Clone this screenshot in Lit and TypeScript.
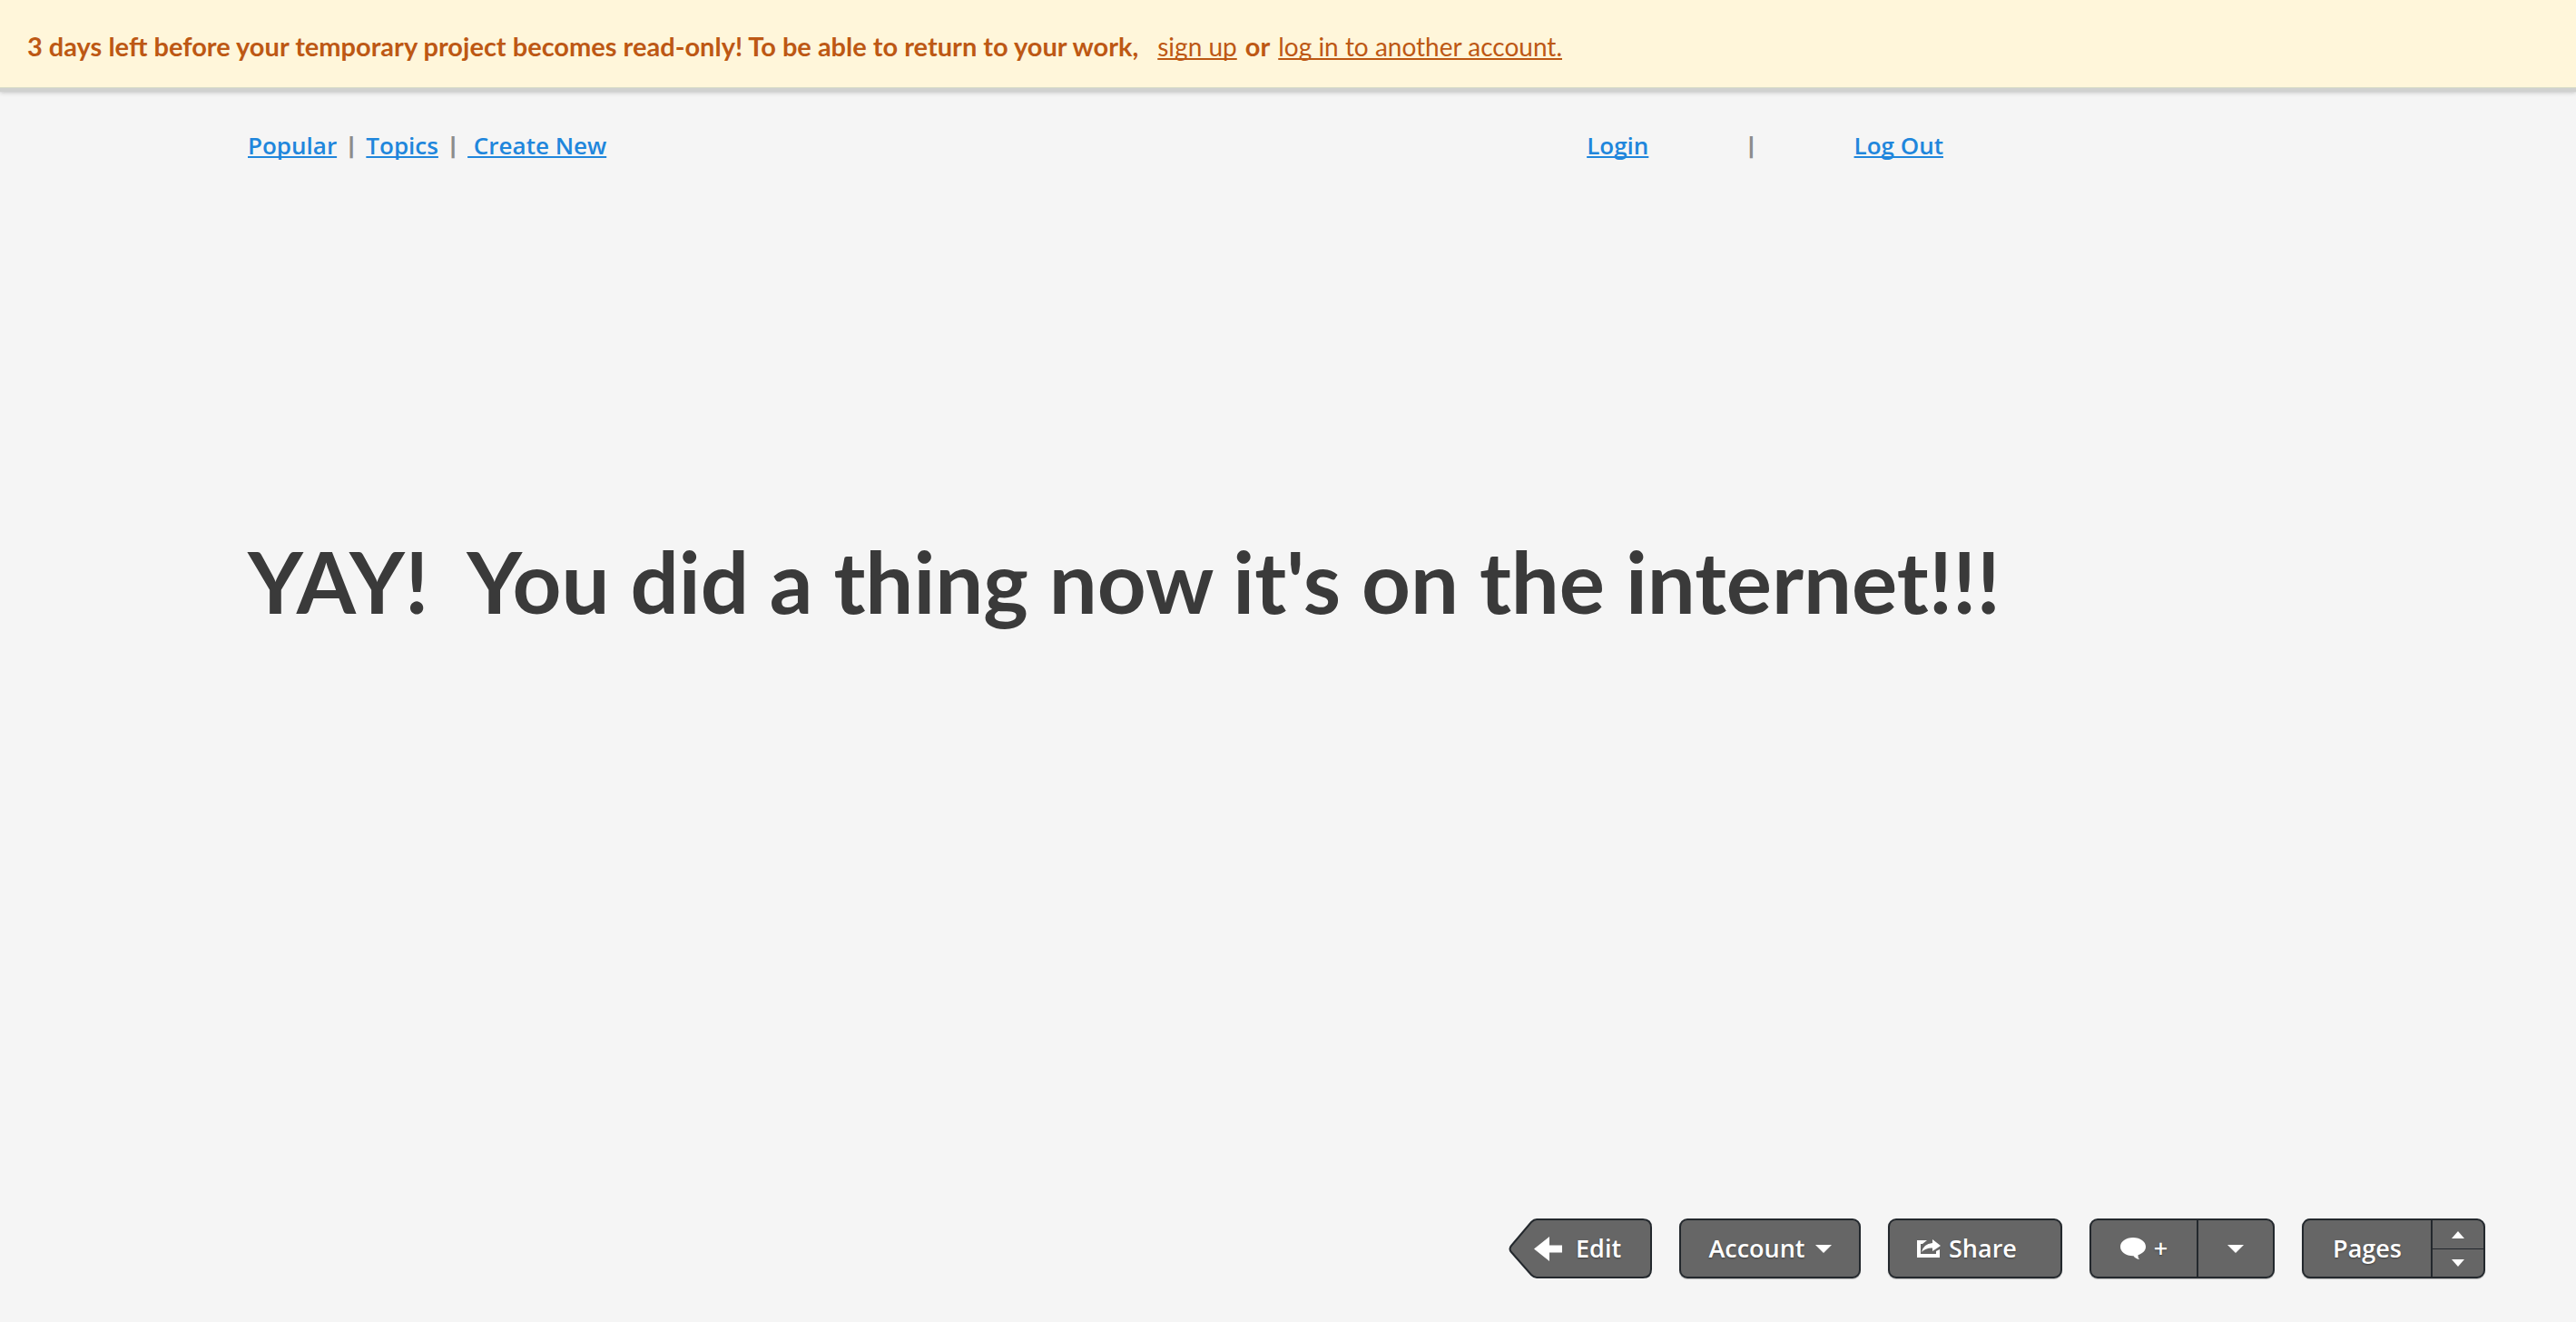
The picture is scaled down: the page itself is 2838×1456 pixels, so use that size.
import { LitElement, html, css, svg } from "lit";
import { customElement } from "lit/decorators.js";

const caretDown = html`<svg class="caret" width="18" height="9" viewBox="0 0 18 9" aria-hidden="true">${svg`<path d="M0 0H18L9 9Z" fill="#fff" />`}</svg>`;

@customElement("temp-banner")
export class TempBanner extends LitElement {
  static styles = css`
    :host {
      display: block;
      position: relative;
      background: #fff6da;
      border-bottom: 1px solid #d9dcc8;
      box-shadow: 0 4px 1px #d0d1cf, 0 5px 5px rgba(0, 0, 0, 0.2);
      color: #bd5814;
    }
    .message {
      display: flex;
      flex-wrap: wrap;
      align-items: baseline;
      column-gap: 9px;
      margin: 0;
      padding: 33px 30px 27px;
      font-size: 28px;
      line-height: 36px;
    }
    .strong {
      font-size: 29px;
      font-weight: 700;
    }
    .lead {
      margin-right: 12px;
    }
    a {
      color: inherit;
      text-decoration-thickness: 2px;
      text-underline-offset: 2px;
      text-decoration-skip-ink: none;
    }
  `;

  render() {
    return html`<p class="message">
      <span class="strong lead">3 days left before your temporary project becomes read-only! To be able to return to your work,</span>
      <a href="#signup">sign up</a>
      <span class="strong">or</span>
      <a href="#login">log in to another account.</a>
    </p>`;
  }
}

@customElement("page-nav")
export class PageNav extends LitElement {
  static styles = css`
    :host {
      display: block;
    }
    nav {
      display: flex;
      justify-content: space-between;
      flex-wrap: wrap;
      max-width: 1868px;
      font-family: "Open Sans", "Noto Sans", sans-serif;
      font-size: 26px;
      line-height: 36px;
      font-weight: 600;
    }
    .group {
      display: flex;
      align-items: center;
      gap: 10px;
    }
    .account {
      gap: 107px;
    }
    .bar {
      color: #8c8c8c;
      font-size: 24px;
      font-weight: 800;
    }
    a {
      color: #2086dc;
      white-space: pre;
      text-decoration-thickness: 2px;
      text-underline-offset: 2px;
      text-decoration-skip-ink: none;
    }
  `;

  render() {
    return html`<nav aria-label="Main">
      <div class="group">
        <a href="#popular">Popular</a>
        <span class="bar">|</span>
        <a href="#topics">Topics</a>
        <span class="bar">|</span>
        <a href="#create"> Create New</a>
      </div>
      <div class="group account">
        <a href="#login">Login</a>
        <span class="bar">|</span>
        <a href="#logout">Log Out</a>
      </div>
    </nav>`;
  }
}

@customElement("preview-toolbar")
export class PreviewToolbar extends LitElement {
  static styles = css`
    :host {
      display: block;
    }
    .bar {
      display: flex;
      flex-wrap: wrap;
      justify-content: flex-end;
      gap: 30px;
      font-family: "Open Sans", "Noto Sans", sans-serif;
    }
    button {
      display: flex;
      align-items: center;
      justify-content: center;
      margin: 0;
      border: 0;
      padding: 0;
      background: none;
      color: #fff;
      font: inherit;
      font-size: 27px;
      font-weight: 600;
      line-height: 36px;
      text-shadow: 0 1px 2px rgba(0, 0, 0, 0.4);
      cursor: pointer;
    }
    .box {
      box-sizing: border-box;
      height: 66px;
      border: 2px solid #23282d;
      border-radius: 9px;
      background: #666;
      box-shadow: 0 1px 1px rgba(0, 0, 0, 0.25);
    }
    .edit {
      display: grid;
      justify-content: start;
      height: 66px;
      width: 158px;
    }
    .edit > * {
      grid-area: 1 / 1;
    }
    .edit-label {
      display: flex;
      align-items: center;
      gap: 15px;
      z-index: 1;
      padding-left: 28px;
    }
    .account {
      gap: 11px;
      width: 200px;
    }
    .share {
      gap: 9px;
      justify-content: flex-start;
      padding-left: 30px;
      width: 192px;
    }
    .split {
      display: grid;
      overflow: hidden;
    }
    .comment {
      grid-template-columns: 116px 84px;
    }
    .pages {
      grid-template-columns: 140px 58px;
    }
    .add {
      gap: 9px;
    }
    .side {
      border-left: 2px solid #23282d;
    }
    .stepper {
      display: grid;
      grid-template-rows: 1fr 1fr;
    }
    .lower {
      border-top: 1px solid #23282d;
    }
    svg {
      display: block;
      flex: none;
    }
  `;

  render() {
    return html`<div class="bar" role="toolbar" aria-label="Project">
      <button class="edit">
        <svg width="158" height="66" viewBox="0 0 158 66" aria-hidden="true">
          <path d="M31 1H148Q157 1 157 10V56Q157 65 148 65H31Q28 65 25 62L3 37Q0 33.500 3 30L25 4Q28 1 31 1Z" fill="#666" stroke="#23282d" stroke-width="2" />
        </svg>
        <span class="edit-label">
          <svg width="31" height="27" viewBox="0 0 31 27" aria-hidden="true">
            <path d="M0 13.500L17 0V9.500H31V17.500H17V27Z" fill="#fff" />
          </svg>
          <span>Edit</span>
        </span>
      </button>
      <button class="box account"><span>Account</span>${caretDown}</button>
      <button class="box share">
        <svg width="26" height="20" viewBox="0 0 26 20" aria-hidden="true">
          <path d="M0 1H11L6 5H4V16H21V13L25 11V20H0Z" fill="#fff" />
          <path d="M17 0L26 7L17 13V9.500Q10 9 5 14Q7 5 17 4Z" fill="#fff" />
        </svg>
        <span>Share</span>
      </button>
      <div class="box split comment">
        <button class="add" aria-label="Add comment">
          <svg width="28" height="24" viewBox="0 0 28 24" aria-hidden="true">
            <path d="M14 0C22 0 28 4.500 28 10C28 14 25 17.500 19.500 19.200Q19 22 21 24Q16 23 14.500 20.200C6 20.300 0 16 0 10C0 4.500 6 0 14 0Z" fill="#fff" />
          </svg>
          <span>+</span>
        </button>
        <button class="side" aria-label="Comment options">${caretDown}</button>
      </div>
      <div class="box split pages">
        <button>Pages</button>
        <div class="side stepper">
          <button aria-label="Previous page">
            <svg width="14" height="8" viewBox="0 0 14 8" aria-hidden="true"><path d="M7 0L14 8H0Z" fill="#fff" /></svg>
          </button>
          <button class="lower" aria-label="Next page">
            <svg width="14" height="8" viewBox="0 0 14 8" aria-hidden="true"><path d="M0 0H14L7 8Z" fill="#fff" /></svg>
          </button>
        </div>
      </div>
    </div>`;
  }
}

@customElement("app-root")
export class AppRoot extends LitElement {
  static styles = css`
    :host {
      display: flex;
      flex-direction: column;
      box-sizing: border-box;
      min-height: 100vh;
      background: #f5f5f5;
      color: #3a3a3a;
      font-family: Lato, "Noto Sans", sans-serif;
    }
    .nav {
      padding: 45px 24px 0 273px;
    }
    main {
      flex: 1;
      padding: 406px 24px 48px 273px;
    }
    h1 {
      margin: 0;
      font-size: 94px;
      line-height: 112px;
      font-weight: 700;
      white-space: pre-wrap;
    }
    .tools {
      padding: 0 100px 48px 24px;
    }
  `;

  render() {
    return html`
      <temp-banner></temp-banner>
      <page-nav class="nav"></page-nav>
      <main><h1>YAY!  You did a thing now it's on the internet!!!</h1></main>
      <preview-toolbar class="tools"></preview-toolbar>
    `;
  }
}
